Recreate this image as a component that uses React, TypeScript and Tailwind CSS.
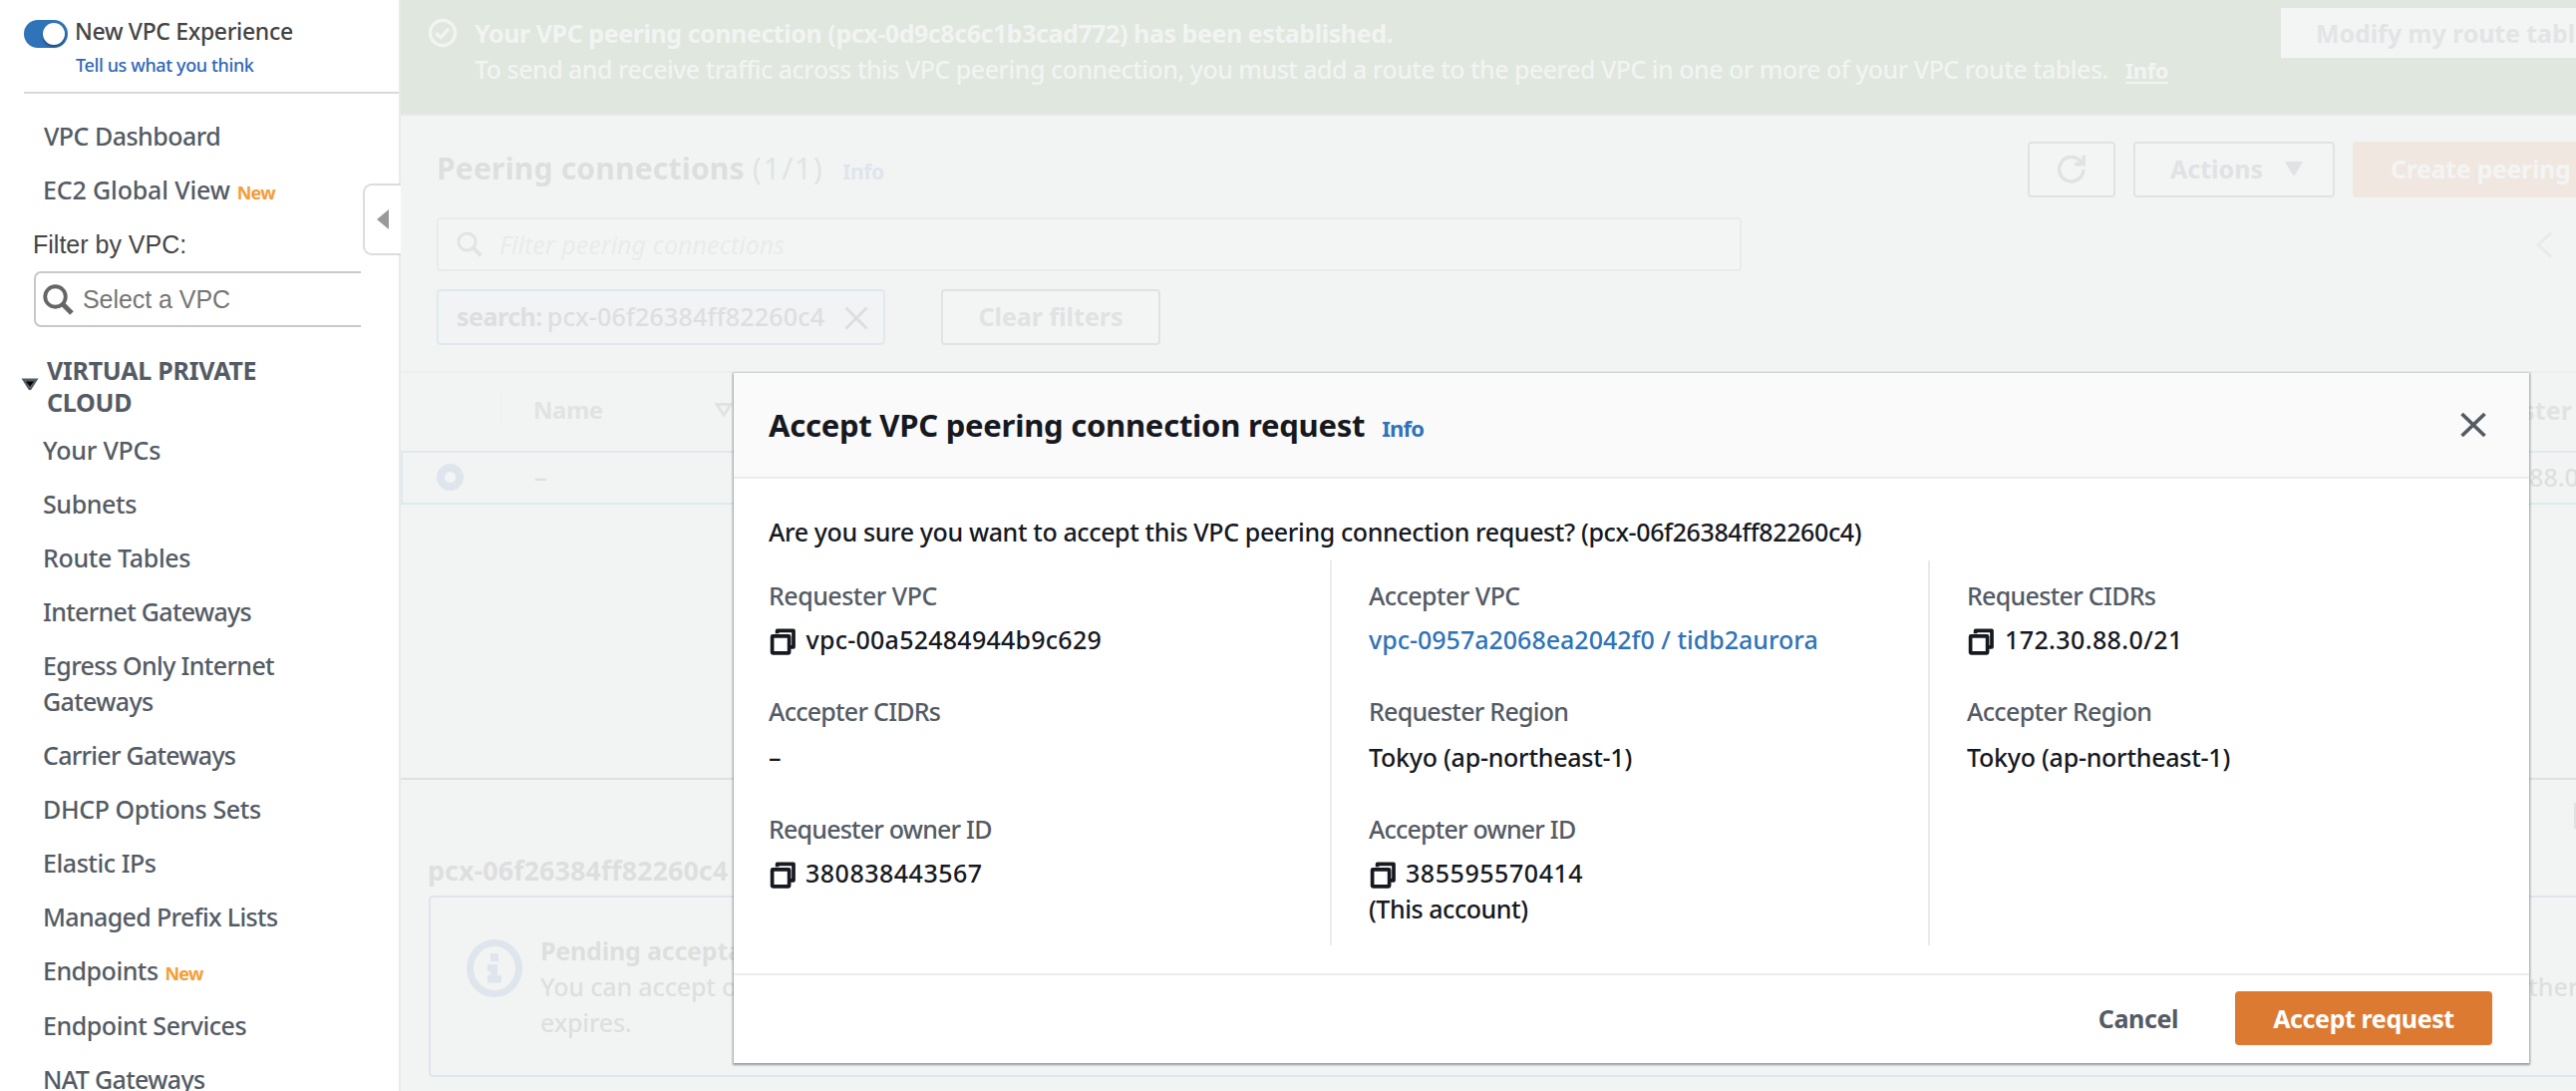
import type { ReactNode } from "react";

const navItems: { label: string; cls: string; isNew?: boolean }[] = [
  { label: "Your VPCs", cls: "tracking-[-0.2px]" },
  { label: "Subnets", cls: "tracking-[-0.4px]" },
  { label: "Route Tables", cls: "tracking-[-0.35px]" },
  { label: "Internet Gateways", cls: "tracking-[-0.7px]" },
  { label: "Egress Only Internet Gateways", cls: "tracking-[-0.65px]" },
  { label: "Carrier Gateways", cls: "tracking-[-0.75px]" },
  { label: "DHCP Options Sets", cls: "tracking-[-0.4px]" },
  { label: "Elastic IPs", cls: "tracking-[-0.45px]" },
  { label: "Managed Prefix Lists", cls: "tracking-[-0.65px]" },
  { label: "Endpoints", cls: "tracking-[-0.5px]", isNew: true },
  { label: "Endpoint Services", cls: "tracking-[-0.45px]" },
  { label: "NAT Gateways", cls: "tracking-[-0.65px]" },
];

function NewBadge() {
  return (
    <span className="ml-[7px] text-[18px] font-bold leading-none tracking-[-0.8px] text-[#f59d37]">New</span>
  );
}

function SearchIcon({ className, width }: { className: string; width: number }) {
  return (
    <svg viewBox="0 0 26 26" className={className} fill="none" stroke="currentColor" strokeWidth={width}>
      <circle cx="10.5" cy="10.5" r="8.6" />
      <path d="M16.5 16.5 L24.3 24.3" strokeWidth={width * 1.3} />
    </svg>
  );
}

function CopyIcon() {
  return (
    <svg viewBox="0 0 27 28" className="mt-[4px] h-[28px] w-[27px] shrink-0" fill="none" stroke="#16191f" strokeWidth="3.7">
      <path d="M8.6 6.2 V3.4 H25 V19.8 H21" strokeLinejoin="round" />
      <rect x="3.6" y="8.8" width="17" height="17" rx="0.6" strokeLinejoin="round" />
    </svg>
  );
}

function Sidebar() {
  return (
    <aside className="relative h-full w-[402px] shrink-0 border-r-2 border-[#e9ebea] bg-white text-[25px] font-medium leading-[36px] text-[#545b64]">
      <div className="flex h-[76px] pl-[24px] pt-[16px]">
        <span className="mt-[4px] flex h-[28px] w-[44px] justify-end rounded-full bg-[#2f73b9] p-[3px]">
          <span className="h-[22px] w-[22px] rounded-full bg-white shadow-[0_2px_3px_rgba(0,0,0,0.35)]" />
        </span>
        <div className="ml-[7px] flex flex-col">
          <span className="text-[23px] leading-[30px] tracking-[-0.33px] text-[#444]">New VPC Experience</span>
          <span className="mt-[7px] pl-[1px] text-[18px] leading-[24px] tracking-[-0.38px] text-[#2f67b8]">
            Tell us what you think
          </span>
        </div>
      </div>
      <div className="ml-[24px] mt-[16px] h-[2px] bg-[#d9d9d9]" />
      <div className="mt-[24px] h-[36px] pl-[44px] tracking-[-0.52px]">VPC Dashboard</div>
      <div className="mt-[18px] h-[36px] whitespace-nowrap pl-[43px] tracking-[-0.15px]">
        EC2 Global View
        <NewBadge />
      </div>
      <div className="mt-[19px] h-[36px] pl-[33px] font-['Liberation_Sans',sans-serif] text-[25px] font-normal text-[#444]">
        Filter by VPC:
      </div>
      <div className="ml-[34px] mt-[9px] flex h-[56px] w-[328px] items-center rounded-l-[7px] border-2 border-r-0 border-[#c8c8c8] pl-[7px] font-['Liberation_Sans',sans-serif] font-normal text-[#757575]">
        <SearchIcon className="h-[31px] w-[31px] text-[#666]" width={3.2} />
        <span className="pl-[9px] tracking-[-0.05px]">Select a VPC</span>
      </div>
      <div className="mt-[27px] flex h-[64px] pl-[21px] font-bold leading-[32px] tracking-[-0.25px]">
        <svg viewBox="0 0 18 13" className="mt-[24px] h-[13px] w-[18px]">
          <path d="M0.5 0.5 H17.5 L10.5 11.5 Q9 13 7.5 11.5 Z" fill="#545b64" />
          <path d="M5 3.5 H13 L9 8.5 Z" fill="#000" />
        </svg>
        <span className="w-[260px] pl-[8px]">
          VIRTUAL PRIVATE
          <br />
          CLOUD
        </span>
      </div>
      <nav className="mt-[13.5px] flex flex-col gap-[18px] pl-[43px]">
        {navItems.map((n) => (
          <div key={n.label} className={n.isNew ? "h-[37px] w-[260px]" : "w-[260px]"}>
            <span className={n.cls}>{n.label}</span>
            {n.isNew && <NewBadge />}
          </div>
        ))}
      </nav>
      <div className="absolute left-[364px] top-[184px] flex h-[72px] w-[38px] items-center rounded-l-[9px] border-2 border-r-0 border-[#dcdcdc] bg-white pl-[12px]">
        <svg viewBox="0 0 12 20" className="h-[20px] w-[12px]" fill="#999">
          <path d="M12 0 V20 L0 10 Z" />
        </svg>
      </div>
    </aside>
  );
}

function FadedButton({ className, children }: { className: string; children: ReactNode }) {
  return (
    <div
      className={`flex h-[56px] shrink-0 items-center justify-center rounded-[4px] border-2 border-[#e1e3e3] bg-[#f3f5f4] font-bold text-[#e0e2e3] ${className}`}
    >
      {children}
    </div>
  );
}

function Background() {
  return (
    <main className="flex h-full min-w-0 flex-1 flex-col overflow-hidden whitespace-nowrap bg-[#f2f4f3] text-[25px] font-medium leading-[36px] text-[#dddfdf]">
      <div className="flex h-[116px] shrink-0 border-b-2 border-[#e6e9e7] bg-[#e0e7de] pl-[27px] text-[#f2f4f3]">
        <svg viewBox="0 0 30 30" className="mt-[18px] h-[30px] w-[30px] shrink-0" fill="none" stroke="currentColor" strokeWidth="3.4">
          <circle cx="15" cy="15" r="12.5" />
          <path d="M8.5 15.2 L13 19.6 L21 11" />
        </svg>
        <div className="w-[1829px] shrink-0 pl-[17px] pt-[14.5px]">
          <div className="font-bold tracking-[-0.44px]">
            Your VPC peering connection (pcx-0d9c8c6c1b3cad772) has been established.
          </div>
          <div className="tracking-[-0.52px]">
            To send and receive traffic across this VPC peering connection, you must add a route to the peered VPC in one or
            more of your VPC route tables.
            <span className="ml-[17px] text-[22px] font-bold leading-[22px] underline decoration-2 underline-offset-[3px]">
              Info
            </span>
          </div>
        </div>
        <div className="mt-[8px] flex h-[50px] w-[340px] shrink-0 items-center bg-[#f3f5f4] pl-[35px] font-bold tracking-[-0.1px] text-[#e2e4e5]">
          Modify my route tables
        </div>
      </div>

      <div className="mt-[26px] flex h-[56px] shrink-0 items-center pl-[36px]">
        <div className="flex w-[1596px] shrink-0 items-baseline pt-px text-[30px] leading-[56px]">
          <span className="font-bold tracking-[0.2px]">Peering connections</span>
          <span className="ml-[8px] font-normal tracking-[1.6px] text-[#e1e3e3]">(1/1)</span>
          <span className="ml-[19px] text-[21px] font-bold tracking-[-0.4px] text-[#dfe5ed]">Info</span>
        </div>
        <FadedButton className="w-[88px]">
          <svg viewBox="0 0 30 30" className="h-[30px] w-[30px]" fill="none" stroke="currentColor" strokeWidth="3.6">
            <path d="M27 15 A12.2 12.2 0 1 1 23.6 6.2 L26 9.5" />
            <path d="M27.2 0.8 V9.6 H18" />
          </svg>
        </FadedButton>
        <FadedButton className="ml-[18px] w-[202px] pb-[3px] pl-[5px]">
          Actions
          <svg viewBox="0 0 18 14" className="ml-[22px] h-[14px] w-[18px]" fill="currentColor">
            <path d="M0 0 H18 L10.5 13 Q9 15 7.5 13 Z" />
          </svg>
        </FadedButton>
        <div className="ml-[18px] flex h-[56px] w-[400px] shrink-0 items-center rounded-[4px] bg-[#f0e7e0] pb-[3px] pl-[38px] font-bold tracking-[-0.35px] text-[#f3f5f4]">
          Create peering connection
        </div>
      </div>

      <div className="mt-[20px] flex h-[54px] shrink-0 items-center pl-[36px]">
        <div className="flex h-[54px] w-[1309px] shrink-0 items-center rounded-[4px] border-2 border-[#eaecec] bg-[#f3f5f4] pl-[18px] text-[#e2e4e4]">
          <SearchIcon className="h-[26px] w-[26px]" width={3} />
          <span className="pl-[17px] font-normal italic tracking-[0.02px] text-[#e9ebeb]">Filter peering connections</span>
        </div>
        <svg viewBox="0 0 18 27" className="ml-[796px] h-[27px] w-[18px] shrink-0" fill="none" stroke="#e9ebeb" strokeWidth="3.2">
          <path d="M16 1.5 L3 13.5 L16 25.5" />
        </svg>
      </div>

      <div className="mt-[18px] flex h-[56px] shrink-0 pl-[36px]">
        <div className="flex h-[56px] w-[450px] items-center rounded-[4px] border-2 border-[#dfe9ee] bg-[#f1f3f4] pb-[3px] pl-[18px]">
          <span className="font-bold tracking-[-0.5px]">search:</span>
          <span className="ml-[5px] tracking-[0.2px]">pcx-06f26384ff82260c4</span>
          <svg viewBox="0 0 24 24" className="ml-[20px] mt-[4px] h-[24px] w-[24px]" fill="none" stroke="currentColor" strokeWidth="3">
            <path d="M1.5 1.5 L22.5 22.5 M22.5 1.5 L1.5 22.5" />
          </svg>
        </div>
        <FadedButton className="ml-[56px] w-[220px] pb-[3px]">Clear filters</FadedButton>
      </div>

      <div className="mt-[26px] h-[80px] shrink-0 border-t-2 border-[#edefee]">
        <div className="flex h-[74px] items-center font-bold text-[#e1e3e3]">
          <div className="ml-[100px] h-[32px] w-px shrink-0 bg-[#eceeed]" />
          <span className="w-[180px] shrink-0 pl-[32px] text-[24px] tracking-[-0.5px]">Name</span>
          <svg viewBox="0 0 18 14" className="ml-[34px] h-[14px] w-[18px] shrink-0" fill="none" stroke="currentColor" strokeWidth="3">
            <path d="M2 1.5 H16 L9 12 Z" />
          </svg>
          <span className="ml-[1717px] shrink-0">Requester CIDRs</span>
        </div>
      </div>
      <div className="-mr-[40px] flex h-[54px] shrink-0 items-center border-2 border-[#dfe9ed] pb-[2px] pl-[34px]">
        <div className="h-[27px] w-[27px] shrink-0 rounded-full border-[8px] border-[#dfe5ed] bg-[#f3f5f4]" />
        <span className="w-[1917px] shrink-0 pl-[71px]">–</span>
        <span className="ml-[70px] shrink-0">172.30.88.0/21</span>
      </div>

      <div className="mt-[274px] h-[2px] shrink-0 bg-[#dfe1e1]" />
      <div className="flex h-[70px] shrink-0 justify-end pt-[23px]">
        <div className="h-[26px] w-[2px] bg-[#e0e2e2]" />
      </div>
      <div className="h-[46px] shrink-0 pl-[27px] text-[27px] font-bold leading-[41px]">pcx-06f26384ff82260c4</div>
      <div className="-mr-[40px] ml-[28px] flex h-[182px] shrink-0 rounded-[4px] border-2 border-[#dfe5ec] pl-[36px]">
        <svg viewBox="0 0 56 58" className="mt-[42px] h-[58px] w-[56px] shrink-0" fill="#dfe5ed">
          <ellipse cx="28" cy="29" rx="24.5" ry="25.5" fill="none" stroke="#dfe5ed" strokeWidth="7" />
          <path d="M24 14 H32 V22 H24 Z M21 25 H31 V36 H35 V43.5 H21 V36 H24 V32 H21 Z" />
        </svg>
        <div className="pl-[18px] pt-[35px]">
          <div className="font-bold tracking-[-0.2px]">Pending acceptance</div>
          <div className="flex">
            <span className="w-[1979px] shrink-0 tracking-[-0.15px]">You can accept or</span>
            <span>other</span>
          </div>
          <div className="tracking-[-0.2px]">expires.</div>
        </div>
      </div>
    </main>
  );
}

function Label({ cls, children }: { cls: string; children: ReactNode }) {
  return <div className={`text-[#545b64] ${cls}`}>{children}</div>;
}

function Copyable({ children, cls }: { children: ReactNode; cls: string }) {
  return (
    <div className="mt-[8px] flex items-center">
      <CopyIcon />
      <span className={cls}>{children}</span>
    </div>
  );
}

function Modal() {
  return (
    <section className="absolute left-[736px] top-[374px] flex h-[692px] w-[1801px] flex-col whitespace-nowrap bg-white text-[25px] font-medium leading-[36px] text-[#16191f] shadow-[0_1px_2px_1px_rgba(0,28,36,0.4)]">
      <header className="flex h-[106px] items-center justify-between border-b-2 border-[#eaeceb] bg-[#fafafa] pl-[35px] pr-[43px]">
        <div className="flex items-baseline pt-[2px]">
          <h2 className="text-[31px] font-bold tracking-[-0.25px]">Accept VPC peering connection request</h2>
          <span className="ml-[17px] text-[22px] font-bold tracking-[-0.8px] text-[#2f73b9]">Info</span>
        </div>
        <svg viewBox="0 0 26 24" className="h-[24px] w-[26px]" fill="none" stroke="#545b64" strokeWidth="3.6">
          <path d="M1.5 1 L24.5 23 M24.5 1 L1.5 23" />
        </svg>
      </header>
      <p className="pl-[35px] pt-[35px] tracking-[-0.38px]">
        Are you sure you want to accept this VPC peering connection request? (pcx-06f26384ff82260c4)
      </p>
      <div className="mt-[11px] grid h-[386px] grid-cols-[598px_600px_603px]">
        <div className="pl-[35px] pt-[16.5px]">
          <Label cls="tracking-[-0.5px]">Requester VPC</Label>
          <Copyable cls="pl-[10.5px] tracking-[0.25px]">vpc-00a52484944b9c629</Copyable>
          <div className="mt-[36px]">
            <Label cls="tracking-[-0.75px]">Accepter CIDRs</Label>
            <div className="mt-[10px]">–</div>
          </div>
          <div className="mt-[36px]">
            <Label cls="tracking-[-0.8px]">Requester owner ID</Label>
            <Copyable cls="pl-[10px] tracking-[0.5px]">380838443567</Copyable>
          </div>
        </div>
        <div className="border-l-2 border-[#eaeceb] pl-[37px] pt-[16.5px]">
          <Label cls="tracking-[-0.55px]">Accepter VPC</Label>
          <div className="mt-[8px] text-[#2f73b9]">vpc-0957a2068ea2042f0 / tidb2aurora</div>
          <div className="mt-[36px]">
            <Label cls="tracking-[-0.75px]">Requester Region</Label>
            <div className="mt-[10px] tracking-[-0.25px]">Tokyo (ap-northeast-1)</div>
          </div>
          <div className="mt-[36px]">
            <Label cls="tracking-[-0.8px]">Accepter owner ID</Label>
            <Copyable cls="pl-[10px] tracking-[0.55px]">385595570414</Copyable>
            <div className="tracking-[-0.45px]">(This account)</div>
          </div>
        </div>
        <div className="border-l-2 border-[#eaeceb] pl-[37px] pt-[16.5px]">
          <Label cls="tracking-[-0.7px]">Requester CIDRs</Label>
          <Copyable cls="pl-[11px] tracking-[0.4px]">172.30.88.0/21</Copyable>
          <div className="mt-[36px]">
            <Label cls="tracking-[-0.65px]">Accepter Region</Label>
            <div className="mt-[10px] tracking-[-0.25px]">Tokyo (ap-northeast-1)</div>
          </div>
        </div>
      </div>
      <footer className="mt-[28px] flex items-center justify-end border-t-2 border-[#eaeceb] pb-[18px] pr-[37px] pt-[16px] font-bold">
        <span className="tracking-[-0.4px] text-[#545b64]">Cancel</span>
        <div className="ml-[57px] flex h-[54px] w-[258px] items-center justify-center rounded-[4px] bg-[#dd7a32] pb-px tracking-[-0.4px] text-white">
          Accept request
        </div>
      </footer>
    </section>
  );
}

export default function App() {
  return (
    <div className="relative flex h-[1094px] w-[2584px] overflow-hidden bg-white font-['Noto_Sans',sans-serif]">
      <Sidebar />
      <Background />
      <Modal />
    </div>
  );
}
